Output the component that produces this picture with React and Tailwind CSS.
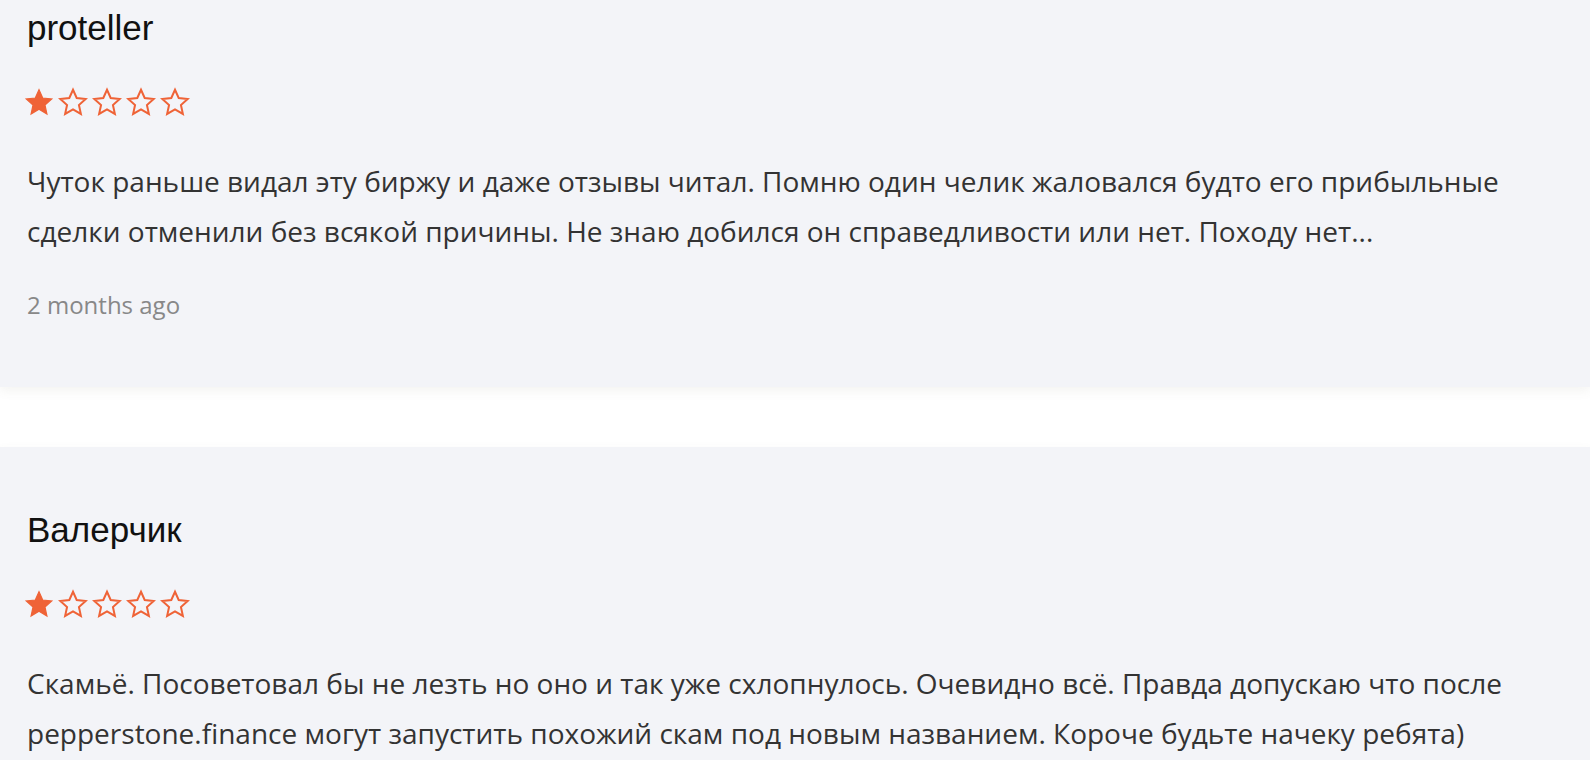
import React from "react";

const reviews = [
  {
    id: 1,
    name: "proteller",
    rating: 1,
    text: "Чуток раньше видал эту биржу и даже отзывы читал. Помню один челик жаловался будто его прибыльные сделки отменили без всякой причины. Не знаю добился он справедливости или нет. Походу нет...",
    date: "2 months ago",
  },
  {
    id: 2,
    name: "Валерчик",
    rating: 1,
    text: "Скамьё. Посоветовал бы не лезть но оно и так уже схлопнулось. Очевидно всё. Правда допускаю что после pepperstone.finance могут запустить похожий скам под новым названием. Короче будьте начеку ребята)",
    date: "2 months ago",
  },
];

const STAR = "M12 2.2l2.95 6.6 7.2.75-5.4 4.85 1.55 7.1L12 17.85 5.7 21.5l1.55-7.1-5.4-4.85 7.2-.75z";

function Star({ filled }) {
  return (
    <svg width="30" height="30" viewBox="0 0 24 24" className="shrink-0 -mx-[2px]">
      <path
        d={STAR}
        fill={filled ? "#ef6337" : "none"}
        stroke="#ef6337"
        strokeWidth={filled ? 1 : 1.6}
        strokeLinejoin="miter"
      />
    </svg>
  );
}

function ReviewCard({ review }) {
  return (
    <div className="bg-[#f3f4f8] px-[27px] pt-[63px] pb-[67px] shadow-[0_4px_10px_rgba(120,110,90,0.08)]">
      <h3 className="font-['Liberation_Sans',Arial,sans-serif] text-[35px] leading-[40px] text-[#111]">
        {review.name}
      </h3>
      <div className="flex gap-[8px] mt-[42px] h-[24px] items-center -ml-[1px]">
        {[1, 2, 3, 4, 5].map((i) => (
          <Star key={i} filled={i <= review.rating} />
        ))}
      </div>
      <p className="mt-[42px] max-w-[1500px] font-['Open_Sans',sans-serif] text-[28px] leading-[50px] text-[#333]">
        {review.text}
      </p>
      <p className="mt-[34px] font-['Open_Sans',sans-serif] text-[24px] leading-[30px] text-[#888]">
        {review.date}
      </p>
    </div>
  );
}

export default function App() {
  return (
    <div className="w-[1590px] h-[760px] overflow-hidden bg-white">
      <div className="flex flex-col gap-[60px] mt-[-55px]">
        {reviews.map((r) => (
          <ReviewCard key={r.id} review={r} />
        ))}
      </div>
    </div>
  );
}
